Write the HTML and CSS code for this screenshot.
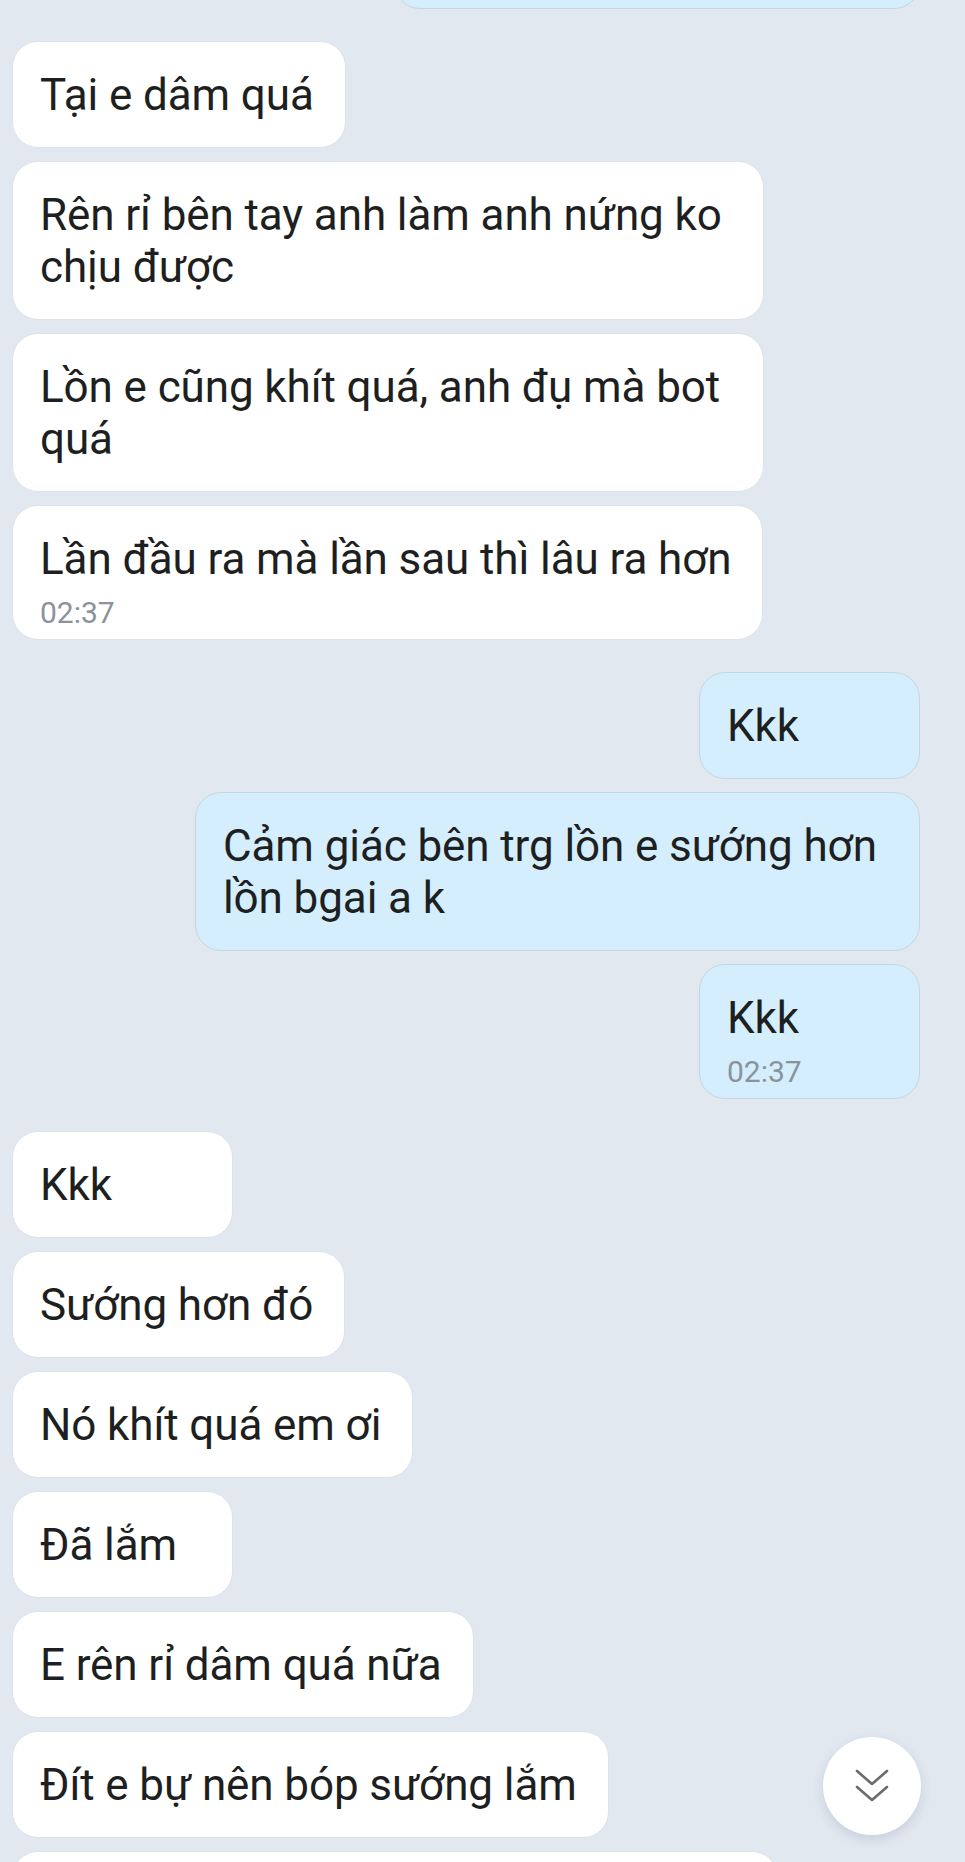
FILE: index.html
```html
<!DOCTYPE html>
<html lang="vi">
<head>
<meta charset="utf-8">
<title>Chat</title>
<link rel="stylesheet" href="styles.css">
</head>
<body>
<div class="screen">
  <div class="chat">
    <div class="group out">
      <div class="bubble out cut-top">&nbsp;</div>
    </div>
    <div class="group in">
      <div class="bubble">Tại e dâm quá</div>
      <div class="bubble">Rên rỉ bên tay anh làm anh nứng ko chịu được</div>
      <div class="bubble">Lồn e cũng khít quá, anh đụ mà bot quá</div>
      <div class="bubble has-time">Lần đầu ra mà lần sau thì lâu ra hơn<div class="time">02:37</div></div>
    </div>
    <div class="group out">
      <div class="bubble out">Kkk</div>
      <div class="bubble out">Cảm giác bên trg lồn e sướng hơn lồn bgai a k</div>
      <div class="bubble out has-time">Kkk<div class="time">02:37</div></div>
    </div>
    <div class="group in">
      <div class="bubble">Kkk</div>
      <div class="bubble">Sướng hơn đó</div>
      <div class="bubble">Nó khít quá em ơi</div>
      <div class="bubble">Đã lắm</div>
      <div class="bubble">E rên rỉ dâm quá nữa</div>
      <div class="bubble">Đít e bự nên bóp sướng lắm</div>
      <div class="bubble cut-bottom">&nbsp;</div>
    </div>
  </div>
  <button class="scroll-down" aria-label="Cuộn xuống">
    <svg width="34" height="34" viewBox="0 0 34 34" fill="none" stroke="#6b6b6b" stroke-width="2.6" stroke-linecap="round" stroke-linejoin="round">
      <polyline points="2,2 17,15 32,2"/>
      <polyline points="2,18 17,31 32,18"/>
    </svg>
  </button>
</div>
</body>
</html>
```

FILE: styles.css
```css
html, body {
  margin: 0;
  padding: 0;
}
body {
  background: #e1e8f0;
  font-family: Roboto, "Noto Sans", "Liberation Sans", sans-serif;
  color: #1e1f21;
}
.screen {
  position: relative;
  width: 965px;
  height: 1862px;
  overflow: hidden;
}
.chat {
  display: flex;
  flex-direction: column;
  gap: 32px;
  padding: 0 45px 0 12px;
}
.group {
  display: flex;
  flex-direction: column;
  gap: 13px;
}
.group.in {
  align-items: flex-start;
}
.group.out {
  align-items: flex-end;
}
.bubble {
  box-sizing: border-box;
  min-width: 221px;
  max-width: 752px;
  padding: 27px 31px 26px 27px;
  background: #ffffff;
  border: 1px solid #dde3e9;
  border-radius: 26px;
  font-size: 44px;
  line-height: 52px;
  letter-spacing: -0.1px;
}
.bubble.out {
  max-width: 725px;
  background: #d4eefd;
  border-color: #c4d8e4;
}
.bubble.has-time {
  padding-bottom: 12px;
}
.time {
  margin-top: 14px;
  font-size: 30px;
  line-height: 28px;
  letter-spacing: 0;
  color: #8a939b;
}
.cut-top {
  width: 526px;
  margin-top: -98px;
}
.cut-bottom {
  width: 766px;
  max-width: none;
}
.scroll-down {
  position: absolute;
  left: 823px;
  top: 1737px;
  width: 98px;
  height: 98px;
  border: none;
  border-radius: 50%;
  background: #ffffff;
  box-shadow: 0 4px 12px rgba(40, 60, 90, 0.14);
  display: flex;
  align-items: center;
  justify-content: center;
  padding: 0;
}
.scroll-down svg {
  display: block;
}
```
